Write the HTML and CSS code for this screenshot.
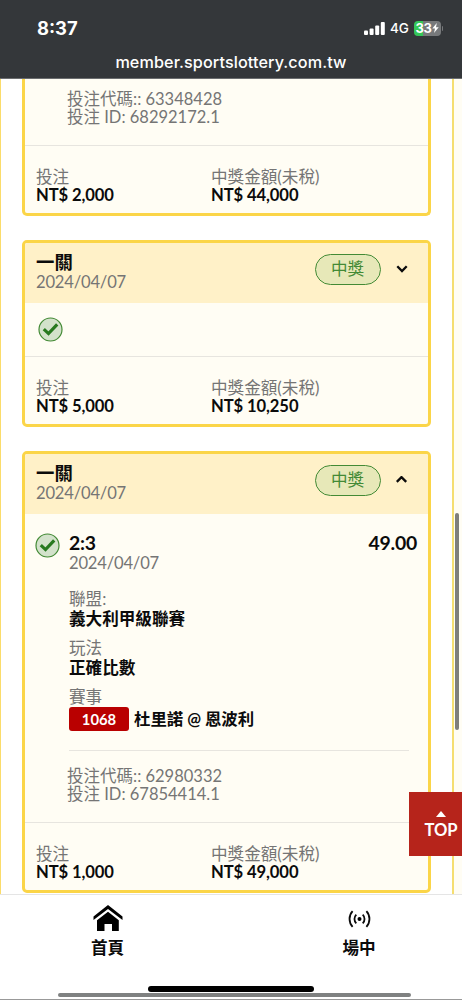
FILE: index.html
```html
<!DOCTYPE html>
<html lang="zh-Hant">
<head>
<meta charset="utf-8">
<title>投注紀錄</title>
<link rel="stylesheet" href="styles.css">
</head>
<body>
<div class="phone">
  <header class="browser-bar">
    <div class="status">
      <span class="time">8:37</span>
      <div class="indicators">
        <svg class="signal" width="21" height="13" viewBox="0 0 21 13" fill="#fff"><rect x="0" y="8.5" width="4" height="4.5" rx="1"/><rect x="5.6" y="6.5" width="4" height="6.5" rx="1"/><rect x="11.2" y="3.5" width="4" height="9.5" rx="1"/><rect x="16.8" y="0" width="4" height="13" rx="1"/></svg>
        <span class="network">4G</span>
        <div class="battery"><span class="level">33</span><svg width="7" height="10" viewBox="0 0 7 10" fill="#fff"><path d="M4.8 0 0.3 5.6H3L2 10 6.7 4.3H4z"/></svg></div>
        <i class="battery-cap"></i>
      </div>
    </div>
    <div class="address">member.sportslottery.com.tw</div>
  </header>

  <main class="page">
    <div class="list">
      <section class="card card-cut">
        <div class="codes"><p>投注代碼:: 63348428</p><p>投注 ID: 68292172.1</p></div>
        <footer class="totals">
          <div class="stake"><p>投注</p><strong>NT$ 2,000</strong></div>
          <div><p>中獎金額(未稅)</p><strong>NT$ 44,000</strong></div>
        </footer>
      </section>

      <section class="card">
        <header class="head">
          <div class="title"><h2>一關</h2><p class="date">2024/04/07</p></div>
          <span class="pill">中獎</span>
          <svg class="chevron" width="12" height="8" viewBox="0 0 12 8"><path d="M1.3 1.2 6 6 10.7 1.2"/></svg>
        </header>
        <div class="summary">
          <svg class="check" width="25" height="25" viewBox="0 0 25 25"><circle cx="12.5" cy="12.5" r="11.5"/><path d="M5.8 12.2 10.5 16.6 19.2 7.4"/></svg>
        </div>
        <footer class="totals">
          <div class="stake"><p>投注</p><strong>NT$ 5,000</strong></div>
          <div><p>中獎金額(未稅)</p><strong>NT$ 10,250</strong></div>
        </footer>
      </section>

      <section class="card">
        <header class="head">
          <div class="title"><h2>一關</h2><p class="date">2024/04/07</p></div>
          <span class="pill">中獎</span>
          <svg class="chevron" width="12" height="8" viewBox="0 0 12 8"><path d="M.8 5.9 5.5 1.1 10.2 5.9"/></svg>
        </header>
        <div class="bet">
          <svg class="check" width="25" height="25" viewBox="0 0 25 25"><circle cx="12.5" cy="12.5" r="11.5"/><path d="M5.8 12.2 10.5 16.6 19.2 7.4"/></svg>
          <div class="detail">
            <div class="score"><b>2:3</b><b>49.00</b></div>
            <p class="date">2024/04/07</p>
            <dl>
              <dt>聯盟:</dt><dd>義大利甲級聯賽</dd>
              <dt>玩法</dt><dd>正確比數</dd>
              <dt>賽事</dt><dd class="match"><span class="number">1068</span>杜里諾 @ 恩波利</dd>
            </dl>
          </div>
        </div>
        <div class="codes"><p>投注代碼:: 62980332</p><p>投注 ID: 67854414.1</p></div>
        <footer class="totals">
          <div class="stake"><p>投注</p><strong>NT$ 1,000</strong></div>
          <div><p>中獎金額(未稅)</p><strong>NT$ 49,000</strong></div>
        </footer>
      </section>
    </div>
    <i class="scroll-y"></i>
    <a class="to-top"><svg width="10" height="6" viewBox="0 0 10 6"><path d="M5 0 10 6H0z" fill="#fff"/></svg>TOP</a>
  </main>

  <nav class="tabs">
    <a class="tab tab-home">
      <svg width="30" height="26" viewBox="0 0 30 26"><path d="M15 0 29.5 11.5V15L15 3.9 .5 15V11.5z"/><path d="M15 6.8 25.8 15.2V26H19V19H11.5V26H4V15.2z"/></svg>
      首頁
    </a>
    <a class="tab tab-live">
      <svg width="24" height="18" viewBox="0 0 24 18"><circle cx="12.5" cy="9" r="2"/><g class="waves"><path d="M9.3 4.6A6.2 6.2 0 0 0 9.3 13.4M15.7 4.6A6.2 6.2 0 0 1 15.7 13.4M5.6 1.2A11.5 11.5 0 0 0 5.6 16.8M19.4 1.2A11.5 11.5 0 0 1 19.4 16.8"/></g></svg>
      場中
    </a>
    <i class="home-indicator"></i>
    <i class="scroll-x"></i>
  </nav>
</div>
</body>
</html>
```
FILE: styles.css
```css
* { box-sizing: border-box; }
body, p, h2, dl, dd { margin: 0; }
body {
  background: #fff;
  color: #0b0b0b;
  font: 16.6px/18px Lato, "Noto Sans CJK TC", sans-serif;
}
svg { display: block; flex: none; }
.phone { width: 462px; height: 1000px; display: flex; flex-direction: column; overflow: hidden; border-bottom: 1px solid #999; }

.browser-bar {
  height: 79px;
  flex: none;
  background: #34373a;
  border-bottom: 1px solid #6b6d6f;
  color: #fff;
  font-family: Inter, sans-serif;
}
.status { height: 51px; padding: 5px 19px 0 37px; display: flex; justify-content: space-between; align-items: center; }
.time { font-size: 18.4px; font-weight: 700; }
.indicators { display: flex; align-items: center; }
.network { margin-left: 5px; width: 23.5px; font-size: 13.5px; font-weight: 500; }
.battery {
  width: 27px; height: 15px; border-radius: 4px;
  background: linear-gradient(90deg, #34c759 33%, #77797b 33%);
  display: flex; align-items: center; justify-content: center;
}
.level { font-size: 13px; font-weight: 700; line-height: 15px; letter-spacing: -.3px; }
.battery-cap { width: 1.5px; height: 5px; margin-left: 1px; border-radius: 0 2px 2px 0; background: #77797b; }
.address { text-align: center; font-size: 16.2px; font-weight: 500; line-height: 22px; letter-spacing: .1px; }

.page { height: 815px; flex: none; position: relative; display: flex; overflow: hidden; background: #fffdf4; }
.list {
  width: 454px;
  padding: 0 21px 0 21px;
  border-left: 1px solid #fbdc6a;
  border-right: 2px solid #f5de71;
  background: #fff;
  display: flex;
  flex-direction: column;
  gap: 24px;
}
.card { width: 409px; flex: none; border: 3px solid #fbd548; border-radius: 5px; background: #fffdf4; overflow: hidden; }
.card-cut { border-top: 0; border-radius: 0 0 5px 5px; }
.codes { padding: 16px 0 19px 42px; color: #757575; font-size: 16.5px; }
.card-cut .codes { padding-top: 11px; }
.totals { border-top: 1px solid #e7e5df; height: 68px; padding: 22px 0 0 11px; display: flex; }
.totals p { color: #757575; }
.totals strong { display: block; letter-spacing: -.1px; }
.stake { width: 175px; }

.head { height: 60px; padding: 0 20px 0 11px; display: flex; align-items: center; background: #fff1c8; }
.title { flex: 1; padding-bottom: 3px; }
.title h2 { font-size: 18.4px; line-height: 20px; }
.date { color: #757575; line-height: 20px; letter-spacing: -.2px; }
.pill {
  width: 66px; height: 31px; margin: -8px 15.5px 0 0;
  border: 1px solid #438a35; border-radius: 16px;
  background: #e7e8b8; color: #438a35;
  line-height: 29px; text-align: center;
}
.chevron { margin-top: -8px; fill: none; stroke: #0b0b0b; stroke-width: 2.3; }
.summary { height: 53px; padding: 14px 0 0 13px; }
.check { fill: #d3e2cb; stroke: #438a35; stroke-width: 1.2; }
.check path { fill: none; stroke: #27791f; stroke-width: 3.2; }

.bet { display: flex; gap: 9px; padding: 18px 11px 0 10px; }
.bet .check { margin-top: 1px; }
.detail { flex: 1; }
.score { display: flex; justify-content: space-between; font-size: 19.4px; line-height: 21px; letter-spacing: -.2px; }
dl { margin: 16px 8px 0 0; padding-bottom: 19px; border-bottom: 1px solid #e7e5df; }
dt { color: #757575; line-height: 20px; }
dd { font-weight: 700; line-height: 20px; margin-bottom: 9px; }
dd.match { display: flex; gap: 5px; line-height: 24px; margin: 0; font-size: 16.4px; }
.number { width: 60px; height: 24px; border-radius: 3px; background: #b90000; color: #fff; text-align: center; font-size: 14.8px; }

.scroll-y { position: absolute; left: 455px; top: 434px; width: 4px; height: 217px; border-radius: 2px; background: #7e7e7b; }
.to-top {
  position: absolute; right: 0; top: 713px; width: 53px; height: 64px; padding: 19px 0 0 11px;
  background: #b6241b; color: #fff; font-weight: 700; line-height: 27px;
  display: flex; flex-direction: column; align-items: center;
}

.tabs { flex: 1; position: relative; padding: 10px 0 0; border-top: 1px solid #e5e5e5; background: #fff; }
.tabs { display: grid; grid-template-columns: 215px 1fr; }
.tab { display: flex; flex-direction: column; align-items: center; font-weight: 700; line-height: 34px; }
.tab-live { padding: 5px 0 0 41px; line-height: 40px; }
.waves { fill: none; stroke: #0b0b0b; stroke-width: 1.8; }
.home-indicator { position: absolute; left: 148px; top: 90.5px; width: 166px; height: 6px; border-radius: 3px; background: #000; }
.scroll-x { position: absolute; left: 58px; top: 98px; width: 353px; height: 4px; border-radius: 2px; background: #7f8181; }
```
